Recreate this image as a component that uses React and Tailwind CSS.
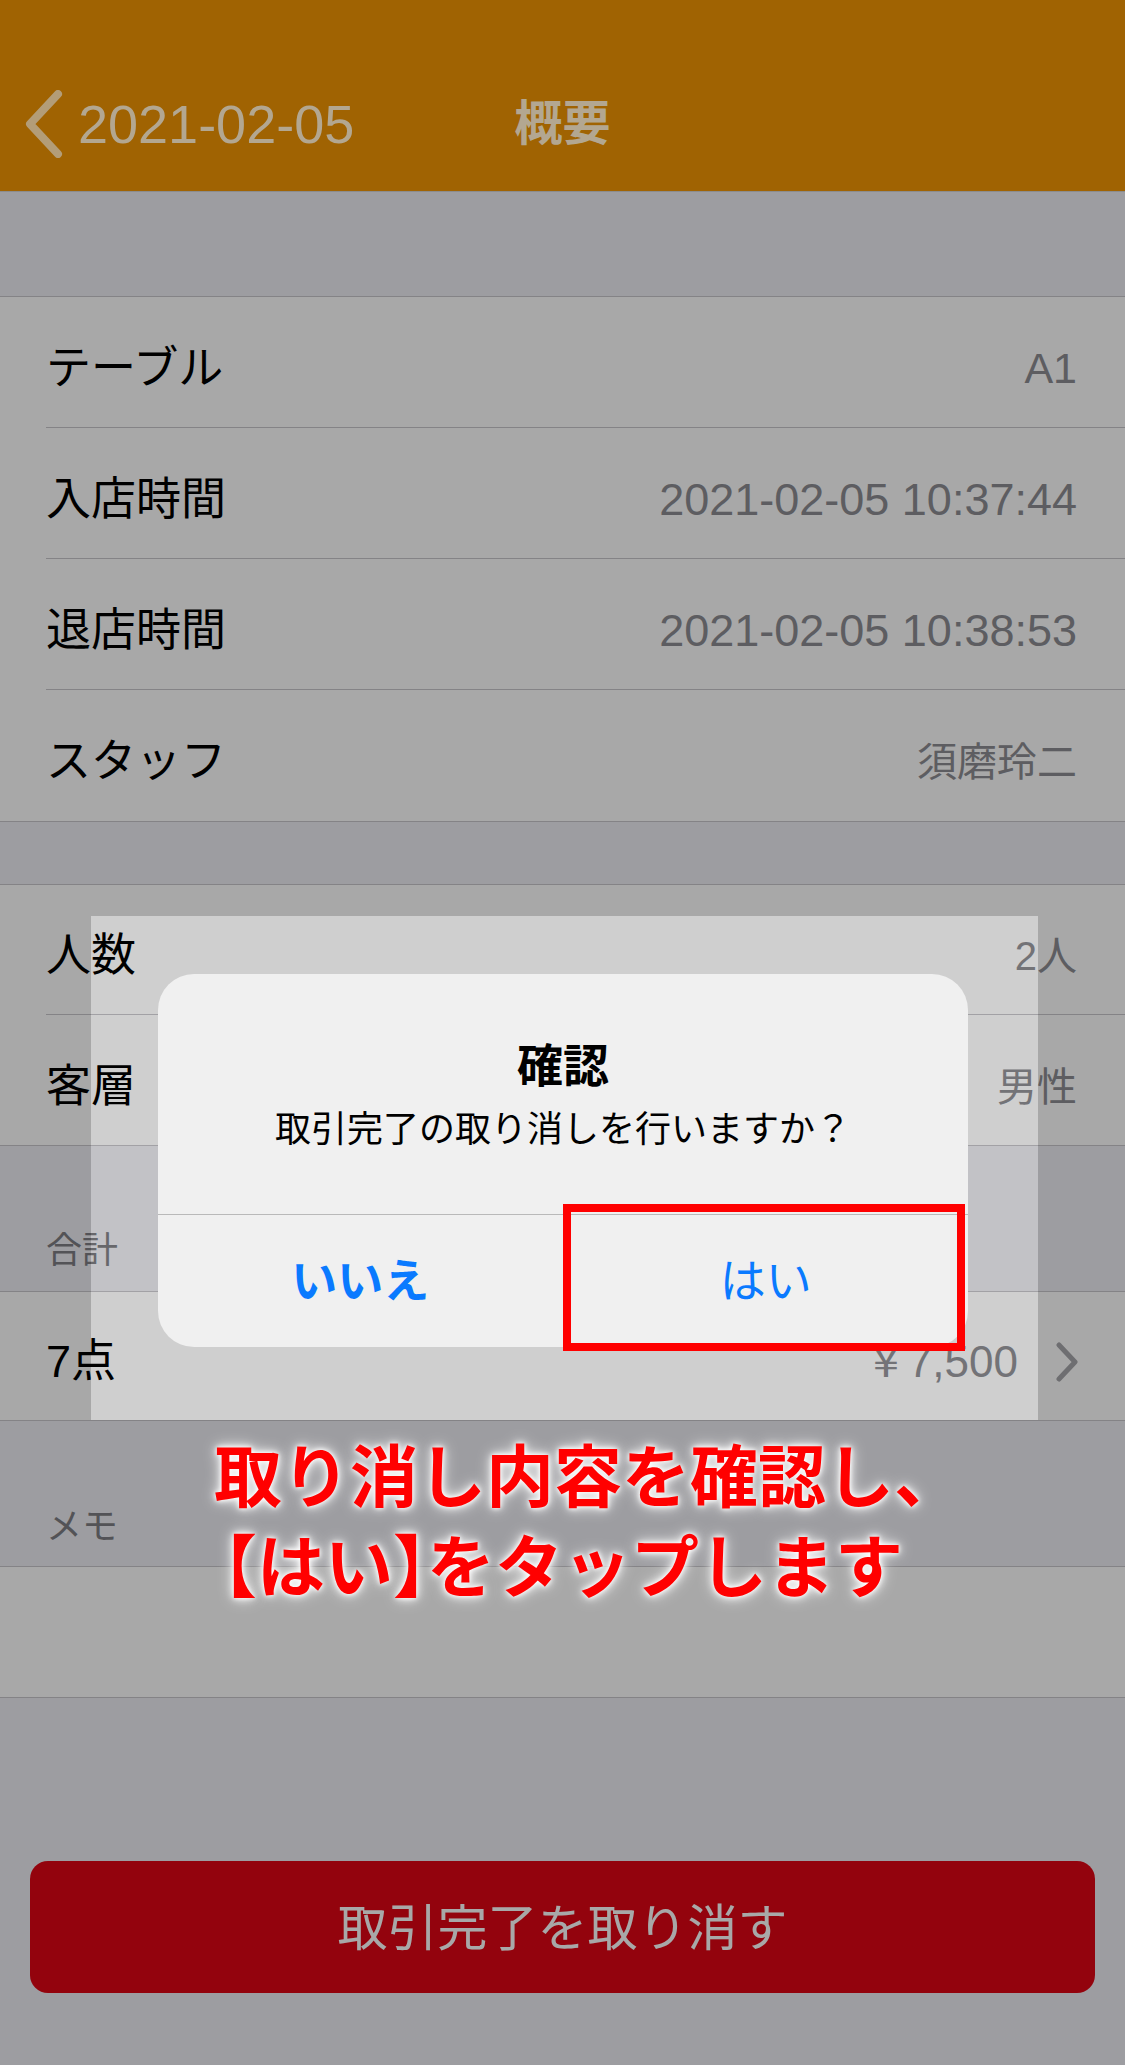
const rows1 = [
  { label: "テーブル", value: "A1" },
  { label: "入店時間", value: "2021-02-05 10:37:44", size: "text-[45px]" },
  { label: "退店時間", value: "2021-02-05 10:38:53", size: "text-[45px]" },
  { label: "スタッフ", value: "須磨玲二", size: "text-[40px]" },
];

const rows2 = [
  { label: "人数", value: "2人", size: "text-[40px]" },
  { label: "客層", value: "男性", size: "text-[40px]" },
];

function Row({ label, value, last, size = "text-[43px]", h = "h-[131px]" }) {
  return (
    <div className="pl-[46px] bg-white">
      <div
        className={`flex items-center justify-between pr-[48px] pt-[13px] ${h} ${
          last ? "" : "border-b border-[#c8c7cc]"
        }`}
      >
        <span className="text-[45px] text-black">{label}</span>
        <span className={`${size} text-[#8e8e93]`}>{value}</span>
      </div>
    </div>
  );
}

function BackChevron() {
  return (
    <svg width="40" height="68" viewBox="0 0 40 68" className="shrink-0">
      <polyline
        points="34,4 6,34 34,64"
        fill="none"
        stroke="#b39d78"
        strokeWidth="8"
        strokeLinecap="round"
        strokeLinejoin="round"
      />
    </svg>
  );
}

function Disclosure() {
  return (
    <svg width="24" height="40" viewBox="0 0 24 40" className="shrink-0">
      <polyline
        points="4,3 20,20 4,37"
        fill="none"
        stroke="#a8a8ac"
        strokeWidth="5"
        strokeLinecap="round"
        strokeLinejoin="round"
      />
    </svg>
  );
}

export default function App() {
  return (
    <div className="relative w-[1125px] h-[2065px] overflow-hidden bg-[#efeff4] font-['Liberation_Sans','Noto_Sans_CJK_JP',sans-serif]">
      {/* nav bar, already dimmed */}
      <header className="relative z-20 h-[192px] bg-[#a06302] border-b border-[#8c8c8c] pt-[60px]">
        <div className="relative flex h-[128px] items-center">
          <div className="flex items-center pl-[24px] gap-[14px]">
            <BackChevron />
            <span className="text-[54px] text-[#b3a791]">2021-02-05</span>
          </div>
          <div className="absolute inset-x-0 text-center text-[48px] font-bold text-[#b3a791]">
            概要
          </div>
        </div>
      </header>

      {/* list content */}
      <div className="h-[104px]" />
      <div className="border-y border-[#c8c7cc]">
        {rows1.map((r, i) => (
          <Row key={r.label} {...r} last={i === rows1.length - 1} />
        ))}
      </div>

      <div className="h-[62px]" />
      <div className="border-y border-[#c8c7cc]">
        {rows2.map((r, i) => (
          <Row key={r.label} {...r} h="h-[130px]" last={i === rows2.length - 1} />
        ))}
      </div>

      <div className="flex h-[145px] items-end pl-[46px] pb-[18px]">
        <span className="text-[36px] leading-[44px] text-[#7f7f84]">合計</span>
      </div>
      <div className="border-y border-[#c8c7cc] bg-white">
        <div className="flex h-[128px] items-center justify-between pl-[46px] pr-[46px] pt-[12px]">
          <span className="text-[45px] text-black">7点</span>
          <div className="flex items-center gap-[37px]">
            <span className="text-[44px] text-[#8e8e93]">￥7,500</span>
            <Disclosure />
          </div>
        </div>
      </div>

      <div className="flex h-[145px] items-end pl-[46px] pb-[17px]">
        <span className="text-[36px] leading-[44px] text-[#7f7f84]">メモ</span>
      </div>
      <div className="border-y border-[#c8c7cc] bg-white h-[132px]" />

      <div className="mt-[163px] mx-[30px] flex h-[132px] items-center justify-center rounded-[18px] bg-[#df0514] pt-[4px]">
        <span className="text-[50px] text-white">取引完了を取り消す</span>
      </div>

      {/* dim layer with a lighter window around the alert */}
      <div className="pointer-events-none absolute inset-x-0 top-[192px] bottom-0 z-10 overflow-hidden">
        <div className="absolute left-[91px] top-[724px] h-[504px] w-[947px] bg-black/[0.19] shadow-[0_0_0_3000px_rgba(0,0,0,0.34)]" />
      </div>

      {/* alert */}
      <div className="absolute left-[158px] top-[974px] z-30 flex h-[373px] w-[810px] flex-col rounded-[36px] bg-[#f0f0f0]">
        <div className="flex flex-1 flex-col items-center pt-[64px]">
          <div className="text-[46px] font-bold leading-[56px] text-black">確認</div>
          <div className="mt-[13px] text-[36px] leading-[46px] text-black">
            取引完了の取り消しを行いますか？
          </div>
        </div>
        <div className="flex h-[133px] border-t border-[#b9b9b9]">
          <div className="flex flex-1 items-center justify-center text-[46px] font-bold text-[#0a7aff]">
            いいえ
          </div>
          <div className="flex flex-1 items-center justify-center border-l border-[#b9b9b9] text-[46px] text-[#0a7aff]">
            はい
          </div>
        </div>
      </div>

      {/* red highlight box */}
      <div className="absolute left-[563px] top-[1204px] z-40 h-[147px] w-[402px] border-[8px] border-[#ff0000]" />

      {/* annotation */}
      <div className="absolute left-[214px] top-[1433px] z-40 text-[68px] font-bold leading-[90px] text-[#ff0000] [text-shadow:0_0_4px_#fff,0_0_8px_#fff,0_0_16px_rgba(255,255,255,0.9)]">
        <div>取り消し内容を確認し、</div>
        <div className="pl-[9px]">
          <span className="[font-feature-settings:'halt']">【</span>はい
          <span className="[font-feature-settings:'halt']">】</span>をタップします
        </div>
      </div>
    </div>
  );
}
